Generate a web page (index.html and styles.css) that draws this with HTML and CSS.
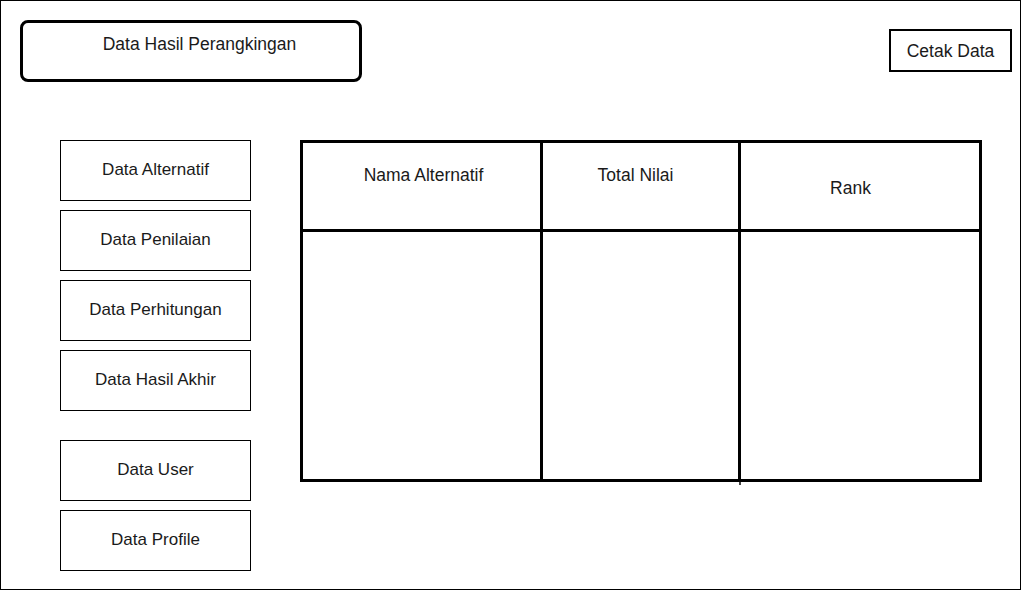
FILE: index.html
```html
<!DOCTYPE html>
<html>
<head>
<meta charset="utf-8">
<link rel="stylesheet" href="styles.css">
</head>
<body>
<div class="frame">
  <div class="top">
    <div class="title">Data Hasil Perangkingan</div>
    <div class="print">Cetak Data</div>
  </div>
  <div class="main">
    <nav class="sidebar">
      <div class="nav-btn">Data Alternatif</div>
      <div class="nav-btn">Data Penilaian</div>
      <div class="nav-btn">Data Perhitungan</div>
      <div class="nav-btn">Data Hasil Akhir</div>
      <div class="nav-btn nav-gap">Data User</div>
      <div class="nav-btn">Data Profile</div>
    </nav>
    <div class="table">
      <div class="cell head c1">Nama Alternatif</div>
      <div class="cell head c2">Total Nilai</div>
      <div class="cell head c3">Rank</div>
      <div class="cell body"></div>
      <div class="cell body c2"></div>
      <div class="cell body"></div>
    </div>
  </div>
</div>
</body>
</html>
```

FILE: styles.css
```css
* { box-sizing: border-box; }
html, body { margin: 0; padding: 0; background: #fff; }
body {
  font-family: "Liberation Sans", Arial, sans-serif;
  font-size: 17.5px;
  line-height: 20px;
  color: #1a1a1a;
}
.frame {
  width: 1021px;
  height: 590px;
  border: 1px solid #000;
  padding: 19px 8px 0 19px;
}
.top {
  display: flex;
  justify-content: space-between;
  align-items: flex-start;
}
.title {
  width: 342px;
  height: 62px;
  border: 3px solid #000;
  border-radius: 8px;
  text-align: center;
  padding: 11px 0 0 17px;
}
.print {
  margin-top: 9px;
  width: 123px;
  height: 43px;
  border: 2px solid #000;
  display: flex;
  align-items: center;
  justify-content: center;
}
.main {
  display: flex;
  align-items: flex-start;
  margin-top: 58px;
  margin-left: 40px;
}
.sidebar {
  display: flex;
  flex-direction: column;
  gap: 9px;
  width: 191px;
}
.nav-btn {
  height: 61px;
  border: 1px solid #000;
  display: flex;
  align-items: center;
  justify-content: center;
  padding-bottom: 1px;
  font-size: 17px;
}
.nav-gap { margin-top: 20px; }
.table {
  margin-left: 49px;
  display: grid;
  grid-template-columns: 240px 198px 241px;
  grid-template-rows: 89px 250px;
  width: 682px;
  border-left: 3px solid #000;
  border-top: 3px solid #000;
}
.cell {
  border-right: 3px solid #000;
  border-bottom: 3px solid #000;
  text-align: center;
}
.head.c1 { padding: 22px 0 0 4px; }
.head.c2 { padding: 22px 10px 0 0; }
.head.c3 { padding: 35px 19px 0 0; }
.body.c2 { position: relative; }
.body.c2::after {
  content: "";
  position: absolute;
  right: -3px;
  bottom: -6px;
  width: 2px;
  height: 3px;
  background: #444;
}
```
